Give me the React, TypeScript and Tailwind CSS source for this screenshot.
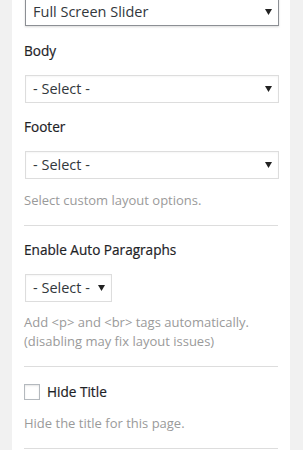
import React from "react";

function Arrow() {
  return (
    <svg width="7" height="6" viewBox="0 0 7 6" className="shrink-0">
      <path d="M0 0 H7 L3.5 6 Z" fill="#222" />
    </svg>
  );
}

function Select({ text, focused, small }: { text: string; focused?: boolean; small?: boolean }) {
  return (
    <div
      className={
        "flex h-[28px] items-center justify-between bg-white pl-[7px] pr-[6px] text-[14.5px] text-[#32373c] " +
        (small ? "w-[87px] " : "w-[254px] ") +
        (focused
          ? "border border-[#8c8f94] shadow-[0_1px_2px_rgba(0,0,0,0.15)]"
          : "border border-[#dddddd] shadow-[inset_0_1px_2px_rgba(0,0,0,0.04)]")
      }
    >
      <span>{text}</span>
      <Arrow />
    </div>
  );
}

export default function App() {
  return (
    <div
      className="flex h-[450px] w-[303px] overflow-hidden bg-[#f1f1f1]"
      style={{ fontFamily: '"Open Sans", "Noto Sans", sans-serif' }}
    >
      <div className="ml-[12px] w-[278px] bg-white pl-[12px] pr-[12px]">
        <div className="mt-[-2px] ml-[1px]">
          <Select text="Full Screen Slider" focused />
        </div>
        <div className="mt-[15px] text-[13.6px] leading-[20px] text-[#1e2226] [-webkit-text-stroke:0.2px_#1e2226]">Body</div>
        <div className="mt-[14px] ml-[1px]">
          <Select text="- Select -" />
        </div>
        <div className="mt-[14px] text-[13.6px] leading-[20px] text-[#1e2226] [-webkit-text-stroke:0.2px_#1e2226]">Footer</div>
        <div className="mt-[14px] ml-[1px]">
          <Select text="- Select -" />
        </div>
        <div className="mt-[11px] text-[13px] leading-[20px] text-[#9a9a9a]">Select custom layout options.</div>
        <div className="mt-[15px] h-px bg-[#dddddd]" />
        <div className="mt-[14px] text-[13.6px] leading-[20px] text-[#1e2226] [-webkit-text-stroke:0.2px_#1e2226]">Enable Auto Paragraphs</div>
        <div className="mt-[14px] ml-[1px]">
          <Select text="- Select -" small />
        </div>
        <div className="mt-[11px] text-[13px] leading-[19px] text-[#9a9a9a]">
          Add &lt;p&gt; and &lt;br&gt; tags automatically.
          <br />
          (disabling may fix layout issues)
        </div>
        <div className="mt-[15px] h-px bg-[#dddddd]" />
        <div className="mt-[15px] flex items-center gap-[7px]">
          <div className="h-[16px] w-[16px] border border-[#b4b9be] bg-white shadow-[inset_0_1px_2px_rgba(0,0,0,0.1)]" />
          <span className="text-[13.6px] leading-[20px] text-[#1e2226] [-webkit-text-stroke:0.2px_#1e2226]">Hide Title</span>
        </div>
        <div className="mt-[11px] text-[13px] leading-[20px] text-[#9a9a9a]">Hide the title for this page.</div>
        <div className="mt-[15px] h-px bg-[#dddddd]" />
      </div>
    </div>
  );
}
